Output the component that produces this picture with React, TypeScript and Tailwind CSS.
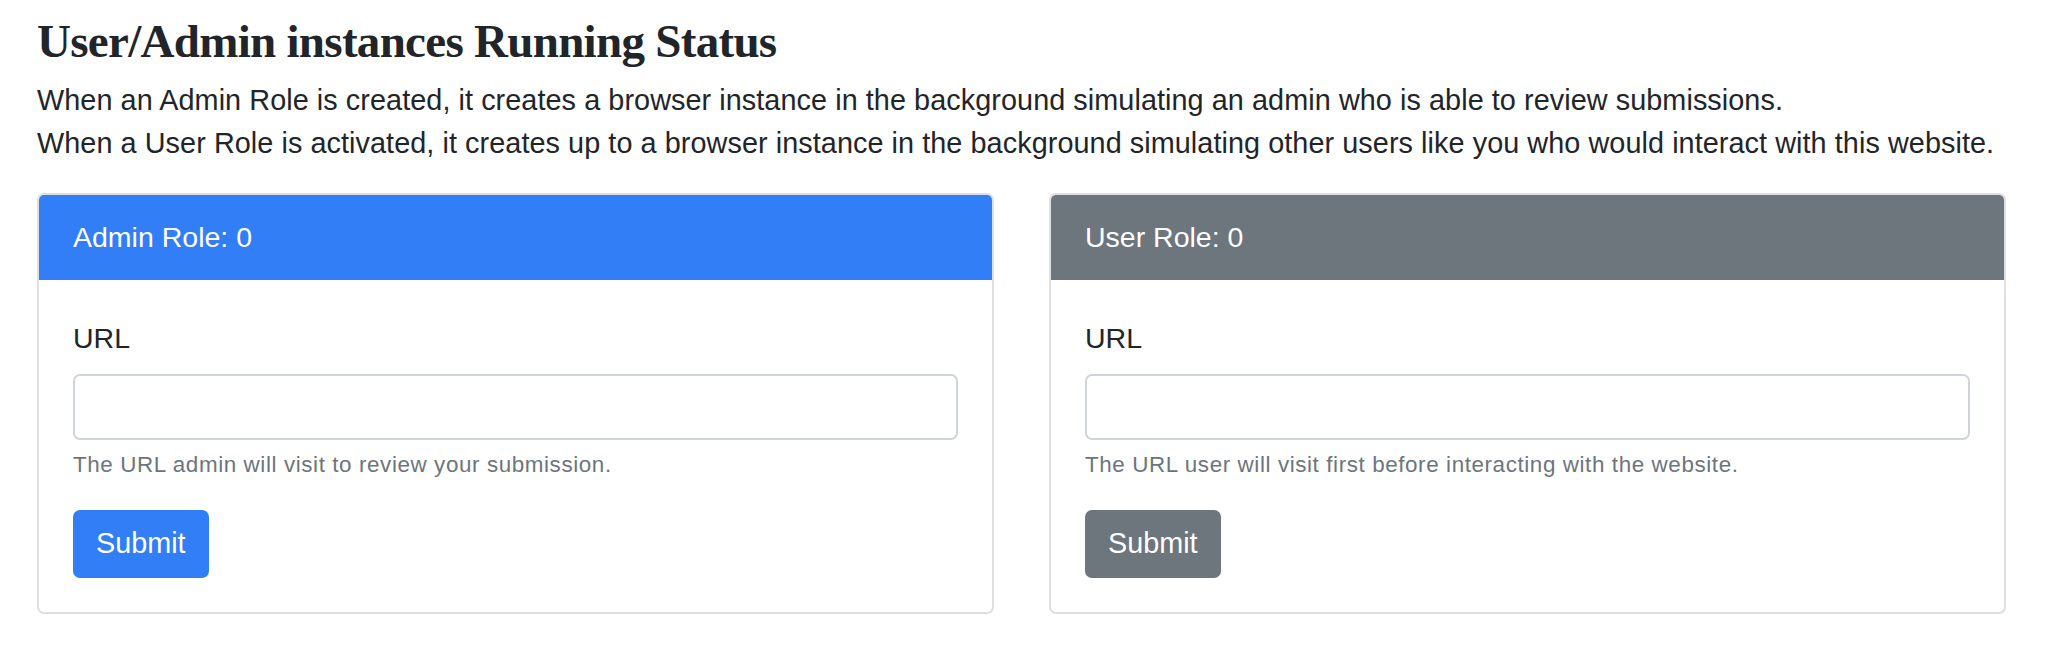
import React from "react";

function RoleCard({
  title,
  headerClass,
  buttonClass,
  help,
}: {
  title: string;
  headerClass: string;
  buttonClass: string;
  help: string;
}) {
  return (
    <div className="flex-1 min-w-0 rounded-[7px] border-2 border-[#dfdfdf] bg-white overflow-hidden">
      <div className={`px-[34px] py-[21px] text-[28.5px] leading-[43px] text-white ${headerClass}`}>
        {title}
      </div>
      <div className="px-[34px] pt-[37px] pb-[34px]">
        <div className="text-[28.5px] leading-[43px] text-[#212529] mb-[14px]">URL</div>
        <input
          type="text"
          className="block w-full h-[66px] rounded-[7px] border-2 border-[#ced4da] bg-white px-[21px] text-[28px] outline-none"
        />
        <div className="mt-[8px] text-[22.4px] leading-[33.6px] tracking-[0.6px] text-[#6c757d]">{help}</div>
        <div className="mt-[28px]">
          <button
            type="button"
            className={`h-[68px] px-[21px] rounded-[7px] border-2 text-[28.8px] leading-[43px] text-white ${buttonClass}`}
          >
            Submit
          </button>
        </div>
      </div>
    </div>
  );
}

export default function App() {
  return (
    <div
      className="min-h-[663px] bg-white text-[#212529] pl-[37px] pr-[42px] pt-[13px]"
      style={{ fontFamily: '"Liberation Sans", Arial, Helvetica, sans-serif' }}
    >
      <h2
        className="text-[47px] leading-[56px] font-bold mb-[10px] tracking-[-0.7px]"
        style={{ fontFamily: '"Liberation Serif", "Times New Roman", serif' }}
      >
        User/Admin instances Running Status
      </h2>
      <p className="text-[28.8px] leading-[43px] tracking-[0.07px] mb-[28px]">
        When an Admin Role is created, it creates a browser instance in the background simulating an admin who is able to review submissions.
        <br />
        When a User Role is activated, it creates up to a browser instance in the background simulating other users like you who would interact with this website.
      </p>
      <div className="flex gap-[55px]">
        <RoleCard
          title="Admin Role: 0"
          headerClass="bg-[#317ef6]"
          buttonClass="bg-[#317ef6] border-[#317ef6]"
          help="The URL admin will visit to review your submission."
        />
        <RoleCard
          title="User Role: 0"
          headerClass="bg-[#6d757d]"
          buttonClass="bg-[#6d757d] border-[#6d757d]"
          help="The URL user will visit first before interacting with the website."
        />
      </div>
    </div>
  );
}
